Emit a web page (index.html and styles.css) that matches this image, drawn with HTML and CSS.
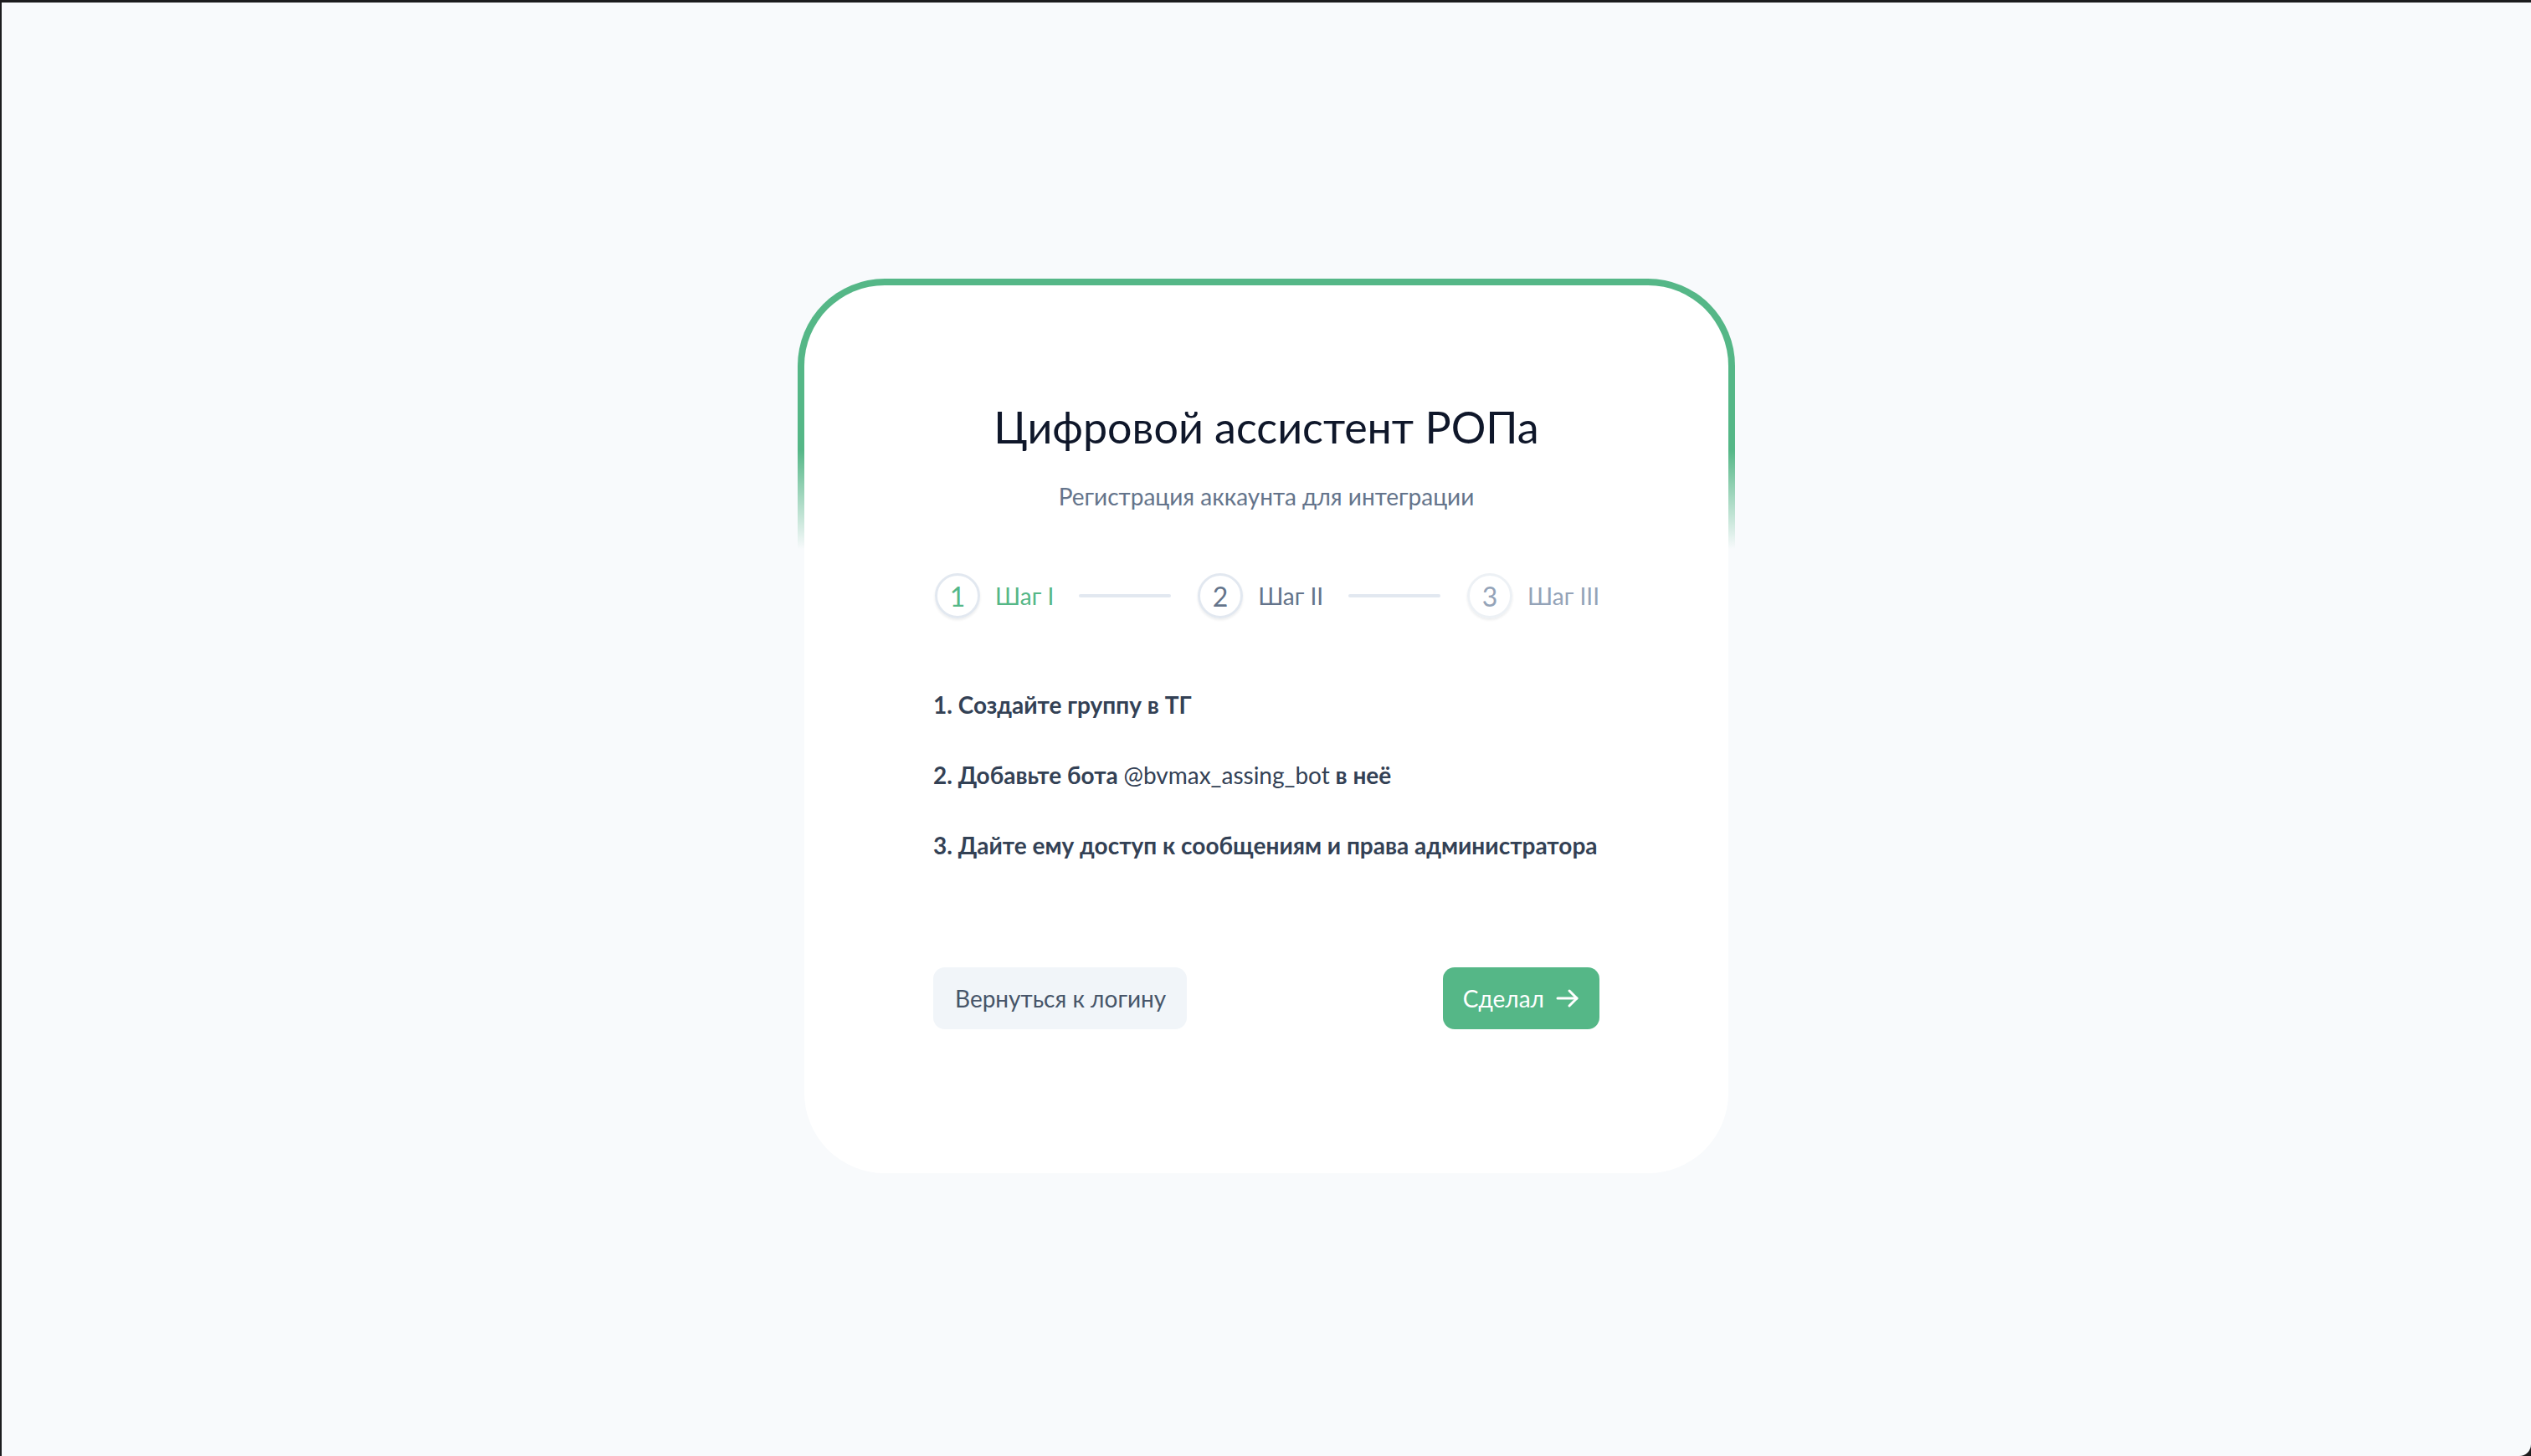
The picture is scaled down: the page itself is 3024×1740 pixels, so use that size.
FILE: index.html
```html
<!DOCTYPE html>
<html lang="ru">
<head>
    <meta charset="UTF-8">
    <meta name="viewport" content="width=device-width, initial-scale=1.0">
    <title>Цифровой ассистент РОПа</title>
    <link rel="stylesheet" href="styles.css">
</head>
<body>
    <div class="screen">
        <div class="card-frame">
            <div class="card">
                <h1 class="card-title">Цифровой ассистент РОПа</h1>
                <p class="card-subtitle">Регистрация аккаунта для интеграции</p>

                <div class="steps">
                    <div class="step step-active">
                        <span class="step-num">1</span>
                        <span class="step-label">Шаг I</span>
                    </div>
                    <div class="step-line"></div>
                    <div class="step step-next">
                        <span class="step-num">2</span>
                        <span class="step-label">Шаг II</span>
                    </div>
                    <div class="step-line"></div>
                    <div class="step step-muted">
                        <span class="step-num">3</span>
                        <span class="step-label">Шаг III</span>
                    </div>
                </div>

                <div class="instructions">
                    <p>1. Создайте группу в ТГ</p>
                    <p>2. Добавьте бота <span class="bot-name">@bvmax_assing_bot</span> в неё</p>
                    <p>3. Дайте ему доступ к сообщениям и права администратора</p>
                </div>

                <div class="actions">
                    <button class="btn btn-secondary">Вернуться к логину</button>
                    <button class="btn btn-primary">
                        Сделал
                        <svg class="btn-icon" width="32" height="32" viewBox="0 0 32 32" fill="none" stroke="currentColor" stroke-width="3" stroke-linecap="round" stroke-linejoin="round">
                            <path d="M4 16h23"/>
                            <path d="M18 7l9 9-9 9"/>
                        </svg>
                    </button>
                </div>
            </div>
        </div>
    </div>
</body>
</html>
```

FILE: styles.css
```css
:root {
    --green: #55b787;
    --slate-50: #f8fafc;
    --slate-100: #f1f5f9;
    --slate-200: #e2e8f0;
    --slate-400: #94a3b8;
    --slate-500: #64748b;
    --slate-600: #475569;
    --slate-700: #334155;
    --slate-900: #0f172a;
}

html, body {
    margin: 0;
    padding: 0;
    height: 100%;
    background: #1c1c1e;
    font-family: Lato, 'Noto Sans', sans-serif;
    overflow: hidden;
}

.screen {
    box-sizing: border-box;
    height: calc(100% - 3px);
    margin: 3px 0 0 2px;
    background: var(--slate-50);
    border-bottom-right-radius: 14px;
    display: flex;
    justify-content: center;
    align-items: center;
}

.card-frame {
    width: 1120px;
    padding: 8px;
    box-sizing: border-box;
    border-radius: 104px;
    background: linear-gradient(to bottom, var(--green) 0%, var(--green) 19%, rgba(85, 183, 135, 0) 30%);
}

.card {
    background: #ffffff;
    border-radius: 96px;
    padding: 134px 154px 172px;
}

.card-title {
    margin: 0;
    font-size: 52px;
    line-height: 70px;
    font-weight: 400;
    text-align: center;
    color: var(--slate-900);
}

.card-subtitle {
    margin: 28px 0 0;
    font-size: 28px;
    line-height: 40px;
    text-align: center;
    color: var(--slate-500);
}

.steps {
    display: flex;
    align-items: center;
    margin-top: 72px;
}

.step {
    display: flex;
    align-items: center;
    gap: 18px;
    font-size: 28px;
}

.step-num {
    width: 54px;
    height: 54px;
    margin-left: 2px;
    box-sizing: border-box;
    border: 3px solid var(--slate-200);
    border-radius: 50%;
    display: flex;
    justify-content: center;
    align-items: center;
    box-shadow: 0 2px 3px rgba(15, 23, 42, 0.08);
    font-size: 32px;
}

.step-line {
    flex: 1;
    height: 4px;
    margin: 0 30px;
    background: var(--slate-200);
    border-radius: 2px;
}

.step-active { color: var(--green); }
.step-next { color: var(--slate-500); }
.step-muted { color: var(--slate-400); }
.step-muted .step-num { border-color: #edf1f5; }

.instructions {
    margin-top: 83px;
    display: flex;
    flex-direction: column;
    gap: 44px;
}

.instructions p {
    margin: 0;
    font-size: 28px;
    line-height: 40px;
    font-weight: 700;
    color: var(--slate-700);
}

.bot-name {
    font-weight: 400;
}

.actions {
    display: flex;
    justify-content: space-between;
    margin-top: 126px;
}

.btn {
    height: 74px;
    padding: 0 24px;
    border: none;
    border-radius: 14px;
    font-family: inherit;
    font-size: 28px;
    display: flex;
    align-items: center;
    gap: 12px;
    cursor: pointer;
}

.btn-secondary {
    background: var(--slate-100);
    color: var(--slate-600);
    padding: 0 25px 0 26px;
}

.btn-primary {
    background: var(--green);
    color: #ffffff;
    padding: 0 22px 0 24px;
}

.btn-icon {
    display: block;
}
```
